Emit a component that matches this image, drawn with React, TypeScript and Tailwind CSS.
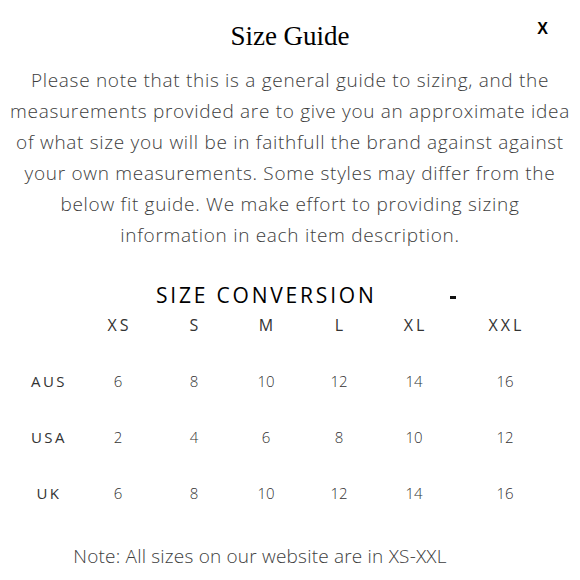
const sizes = ["XS", "S", "M", "L", "XL", "XXL"];

const rows = [
  { label: "AUS", values: ["6", "8", "10", "12", "14", "16"] },
  { label: "USA", values: ["2", "4", "6", "8", "10", "12"] },
  { label: "UK", values: ["6", "8", "10", "12", "14", "16"] },
];

const cols = "grid grid-cols-[70px_70px_82px_62px_84px_66px_116px]";

export default function App() {
  return (
    <div className="w-[580px] h-[580px] bg-white overflow-hidden font-['Open_Sans',sans-serif]">
      <div className="relative pt-[19px]">
        <h1 className="text-center font-['Liberation_Serif',serif] text-[27px] leading-[34px] text-black">
          Size Guide
        </h1>
        <button className="absolute right-[32px] top-[19px] font-['Liberation_Sans',sans-serif] font-bold text-[16px] leading-[20px] text-black">
          X
        </button>
      </div>

      <p className="mt-[12px] text-center text-[19px] tracking-[0.7px] leading-[31px] text-[#3d3d3d] font-light">
        Please note that this is a general guide to sizing, and the
        <br />
        measurements provided are to give you an approximate idea
        <br />
        of what size you will be in faithfull the brand against against
        <br />
        your own measurements. Some styles may differ from the
        <br />
        below fit guide. We make effort to providing sizing
        <br />
        information in each item description.
      </p>

      <div className="mt-[29px] flex items-center pl-[156px]">
        <h2 className="text-[21px] tracking-[2.8px] leading-[30px] text-black font-medium">
          SIZE CONVERSION
        </h2>
        <span className="ml-[73px] mt-[4px] block w-[6px] h-[3px] bg-[#111]" />
      </div>

      <div className="ml-[13px] mt-[3px] text-[15px] text-[#333]">
        <div className={`${cols} h-[56px] items-start pt-[2px]`}>
          <div />
          {sizes.map((s) => (
            <div key={s} className="text-center text-[16px] tracking-[3px] leading-[20px] pl-[3px]">
              {s}
            </div>
          ))}
        </div>
        {rows.map((r) => (
          <div key={r.label} className={`${cols} h-[56px] items-start pt-[2px]`}>
            <div className="text-center tracking-[2.5px] leading-[20px] pl-[2px]">{r.label}</div>
            {r.values.map((v, i) => (
              <div key={i} className="text-center leading-[20px] font-light">
                {v}
              </div>
            ))}
          </div>
        ))}
      </div>

      <p className="mt-[7px] pr-[60px] text-center text-[19px] tracking-[0.2px] leading-[24px] text-[#3d3d3d] font-light">
        Note: All sizes on our website are in XS-XXL
      </p>
    </div>
  );
}
